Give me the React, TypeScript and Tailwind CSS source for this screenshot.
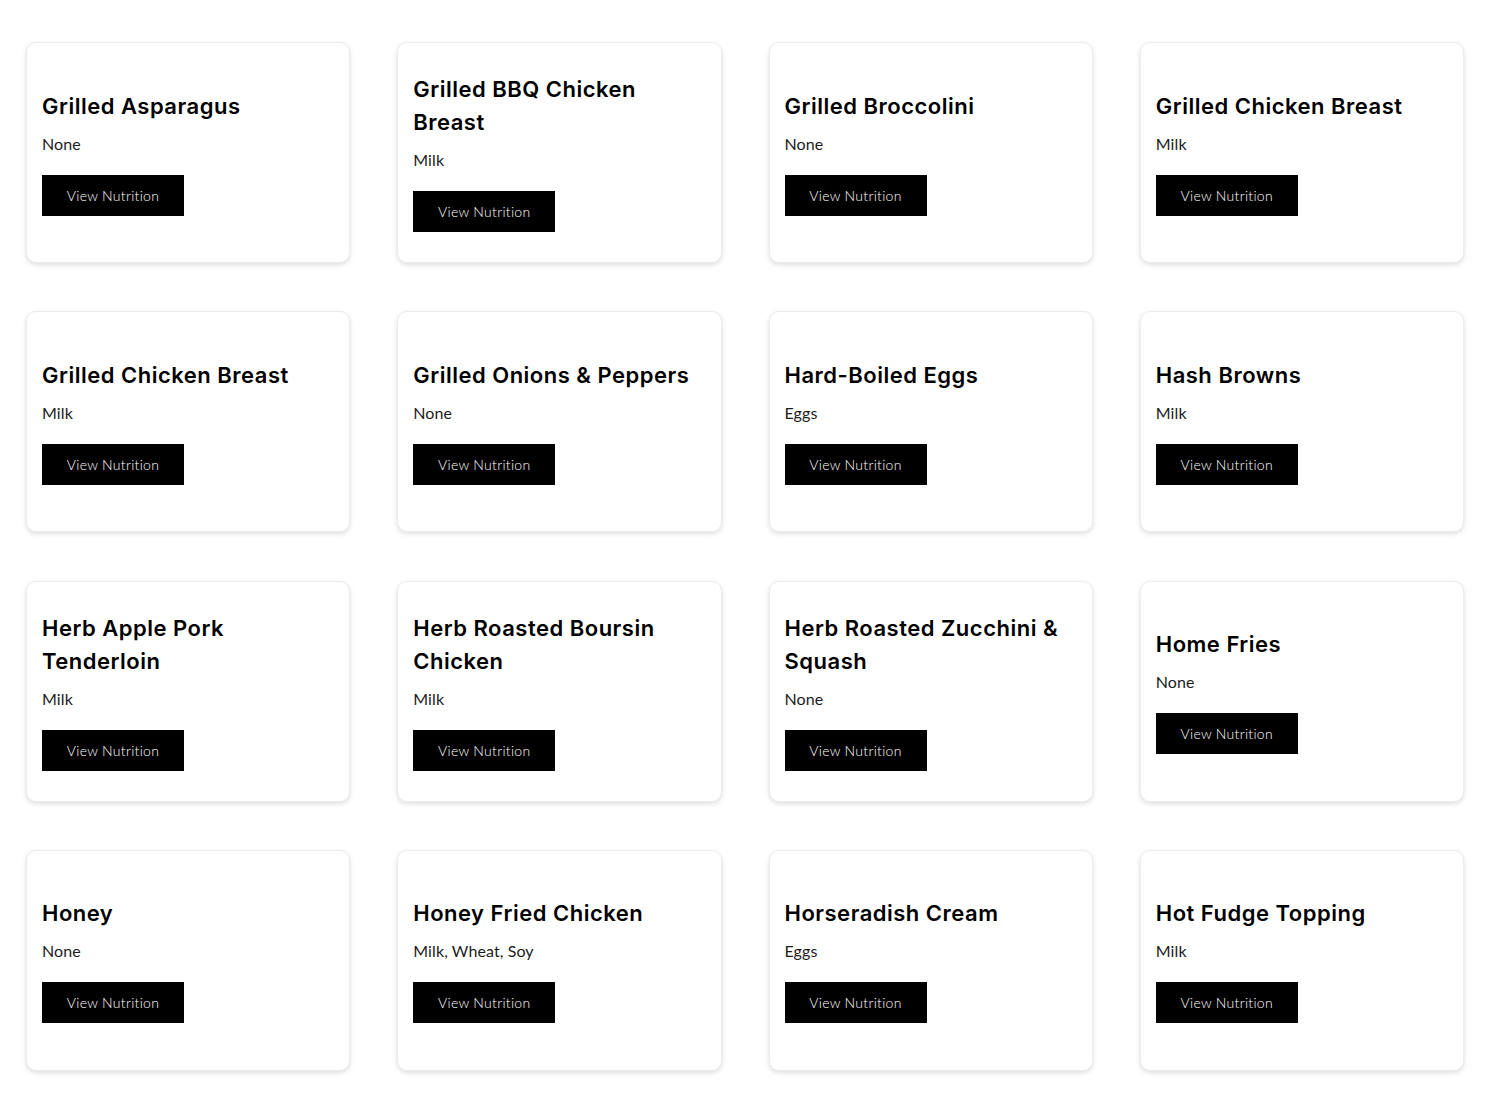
import React from "react";

type Item = { name: string; allergens: string };

const ITEMS: Item[] = [
  { name: "Grilled Asparagus", allergens: "None" },
  { name: "Grilled BBQ Chicken Breast", allergens: "Milk" },
  { name: "Grilled Broccolini", allergens: "None" },
  { name: "Grilled Chicken Breast", allergens: "Milk" },
  { name: "Grilled Chicken Breast", allergens: "Milk" },
  { name: "Grilled Onions & Peppers", allergens: "None" },
  { name: "Hard-Boiled Eggs", allergens: "Eggs" },
  { name: "Hash Browns", allergens: "Milk" },
  { name: "Herb Apple Pork Tenderloin", allergens: "Milk" },
  { name: "Herb Roasted Boursin Chicken", allergens: "Milk" },
  { name: "Herb Roasted Zucchini & Squash", allergens: "None" },
  { name: "Home Fries", allergens: "None" },
  { name: "Honey", allergens: "None" },
  { name: "Honey Fried Chicken", allergens: "Milk, Wheat, Soy" },
  { name: "Horseradish Cream", allergens: "Eggs" },
  { name: "Hot Fudge Topping", allergens: "Milk" },
];

function MenuCard({ item }: { item: Item }) {
  return (
    <div className="flex h-[221px] flex-col justify-center rounded-[10px] border border-[#ececec] bg-white px-[15px] shadow-[0_2px_5px_rgba(0,0,0,0.13)]">
      <h3 className="pr-1 font-['Inter','Noto_Sans',sans-serif] text-[22px] font-semibold leading-[33px] tracking-[0.5px] text-black">
        {item.name}
      </h3>
      <p className="mt-[9px] font-['Lato','Noto_Sans',sans-serif] text-[16px] leading-6 tracking-[0.1px] text-[#1c1c1c]">
        {item.allergens}
      </p>
      <div className="mt-[19px]">
        <button className="h-[41px] w-[142px] bg-black font-['Lato','Noto_Sans',sans-serif] text-[14px] font-light tracking-[0.3px] text-white">
          View Nutrition
        </button>
      </div>
    </div>
  );
}

export default function App() {
  return (
    <div className="min-h-screen bg-white px-[26px] pt-[42px] pb-10">
      <div className="grid grid-cols-4 gap-x-[47px] gap-y-[48.3px]">
        {ITEMS.map((item, i) => (
          <MenuCard key={`${item.name}-${i}`} item={item} />
        ))}
      </div>
    </div>
  );
}
